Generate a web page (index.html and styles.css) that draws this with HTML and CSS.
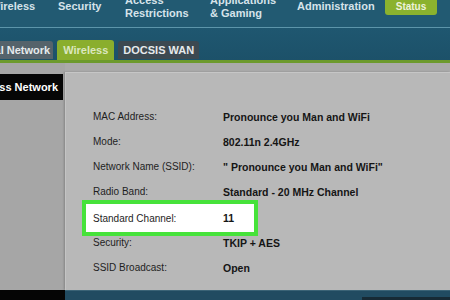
FILE: index.html
```html
<!DOCTYPE html>
<html lang="en">
<head>
    <meta charset="UTF-8">
    <meta name="viewport" content="width=device-width, initial-scale=1.0">
    <title>Router Status - Wireless</title>
    <link rel="stylesheet" href="styles.css">
</head>
<body>

<header class="topbar">
    <nav class="mainnav">
        <span class="nav-item">Wireless</span>
        <span class="nav-item">Security</span>
        <span class="nav-item">Access<br>Restrictions</span>
        <span class="nav-item">Applications<br>&amp; Gaming</span>
        <span class="nav-item">Administration</span>
        <span class="nav-item status">Status</span>
    </nav>
</header>

<div class="subbar">
    <span class="tab tab-local">Local Network</span>
    <span class="tab tab-active">Wireless</span>
    <span class="tab">DOCSIS WAN</span>
</div>
<div class="strip"></div>

<main class="main">
    <aside class="side">
        <div class="side-head"><span>Wireless Network</span></div>
    </aside>

    <section class="panel">
        <div class="row">
            <span class="label">MAC Address:</span>
            <span class="value">Pronounce you Man and WiFi</span>
        </div>
        <div class="row">
            <span class="label">Mode:</span>
            <span class="value">802.11n 2.4GHz</span>
        </div>
        <div class="row">
            <span class="label">Network Name (SSID):</span>
            <span class="value">" Pronounce you Man and WiFi"</span>
        </div>
        <div class="row">
            <span class="label">Radio Band:</span>
            <span class="value">Standard - 20 MHz Channel</span>
        </div>
        <!-- highlighted row -->
        <div class="row row-hl">
            <span class="label">Standard Channel:</span>
            <span class="value">11</span>
        </div>
        <div class="row">
            <span class="label">Security:</span>
            <span class="value">TKIP + AES</span>
        </div>
        <div class="row">
            <span class="label">SSID Broadcast:</span>
            <span class="value">Open</span>
        </div>
    </section>
</main>

<footer class="bottom">
    <div class="bottom-left"></div>
    <div class="bottom-right"><span class="bottom-tab"></span></div>
</footer>

</body>
</html>
```

FILE: styles.css
```css
body {
    font-family: 'Liberation Sans', Arial, Helvetica, sans-serif;
    margin: 0;
    padding: 0;
    width: 450px;
    height: 300px;
    overflow: hidden;
    background-color: #a6a6a6;
    color: #222;
}

.topbar {
    height: 27px;
    background-color: #225a72;
    border-bottom: 1px solid #5d95aa;
    overflow: hidden;
}

.mainnav {
    display: grid;
    grid-template-columns: 68px 67px 85px 87px 88px 52px;
    grid-template-rows: 13px;
    align-items: center;
    margin-left: -10px;
    font-size: 11px;
    font-weight: bold;
    line-height: 13px;
    color: #d6e3ea;
}

.nav-item {
    white-space: nowrap;
}

.status {
    height: 16px;
    line-height: 16px;
    text-align: center;
    font-size: 10px;
    background-color: #8bb22e;
    color: #eef3dc;
    border-radius: 0 0 3px 3px;
}

.subbar {
    height: 32px;
    display: flex;
    align-items: flex-end;
    gap: 4px;
    margin-left: -30px;
    background: linear-gradient(#1f5770, #1c5169);
}

.tab {
    height: 18px;
    line-height: 18px;
    padding: 0 5px;
    margin-bottom: 1px;
    font-size: 11px;
    font-weight: bold;
    color: #e6eaec;
    background-color: #3c4951;
    border-radius: 3px 3px 0 0;
    white-space: nowrap;
}

.tab-local {
    padding-right: 3px;
    background-color: #55636b;
}

.tab-active {
    height: 20px;
    line-height: 20px;
    padding: 0 6px;
    margin-bottom: 0;
    background-color: #8aae2d;
    color: #dbe7c0;
}

.strip {
    height: 3px;
    background-color: #6c9a2c;
}

.main {
    display: flex;
    height: 227px;
    background-color: #aaaaaa;
}

.side {
    width: 65px;
    flex-shrink: 0;
    padding-top: 11px;
    background-color: #a6a6a6;
}

.side-head {
    width: 63px;
    height: 26px;
    box-sizing: border-box;
    display: flex;
    justify-content: flex-end;
    align-items: center;
    padding-right: 5px;
    overflow: hidden;
    white-space: nowrap;
    background-color: #060606;
    color: #fff;
    font-size: 11px;
    font-weight: bold;
}

.panel {
    flex: 1;
    margin-top: 9px;
    padding: 31px 0 0 27px;
    background-color: #b8b8b8;
    border-top: 1px solid #c6c6c6;
    border-left: 1px solid #c4c4c4;
    box-shadow: -1px 0 2px rgba(0, 0, 0, 0.2);
}

.row {
    display: flex;
    align-items: center;
    height: 25px;
    font-size: 10px;
    color: #1e1e1e;
}

.label {
    width: 130px;
    flex-shrink: 0;
}

.value {
    font-size: 10.5px;
    font-weight: bold;
    color: #151515;
    white-space: nowrap;
}

.row-hl {
    width: 176px;
    height: 36px;
    box-sizing: border-box;
    margin: -4px 0 -6px -11px;
    padding-left: 7px;
    border: 4px solid #46e23a;
    background-color: #fff;
}

.bottom {
    display: flex;
    height: 10px;
}

.bottom-left {
    width: 65px;
    background-color: #050505;
}

.bottom-right {
    flex: 1;
    display: flex;
    justify-content: flex-end;
    align-items: flex-end;
    background-color: #214b61;
    border-top: 1px solid #3b6376;
}

.bottom-tab {
    width: 88px;
    height: 3px;
    background-color: #172a35;
}
```
